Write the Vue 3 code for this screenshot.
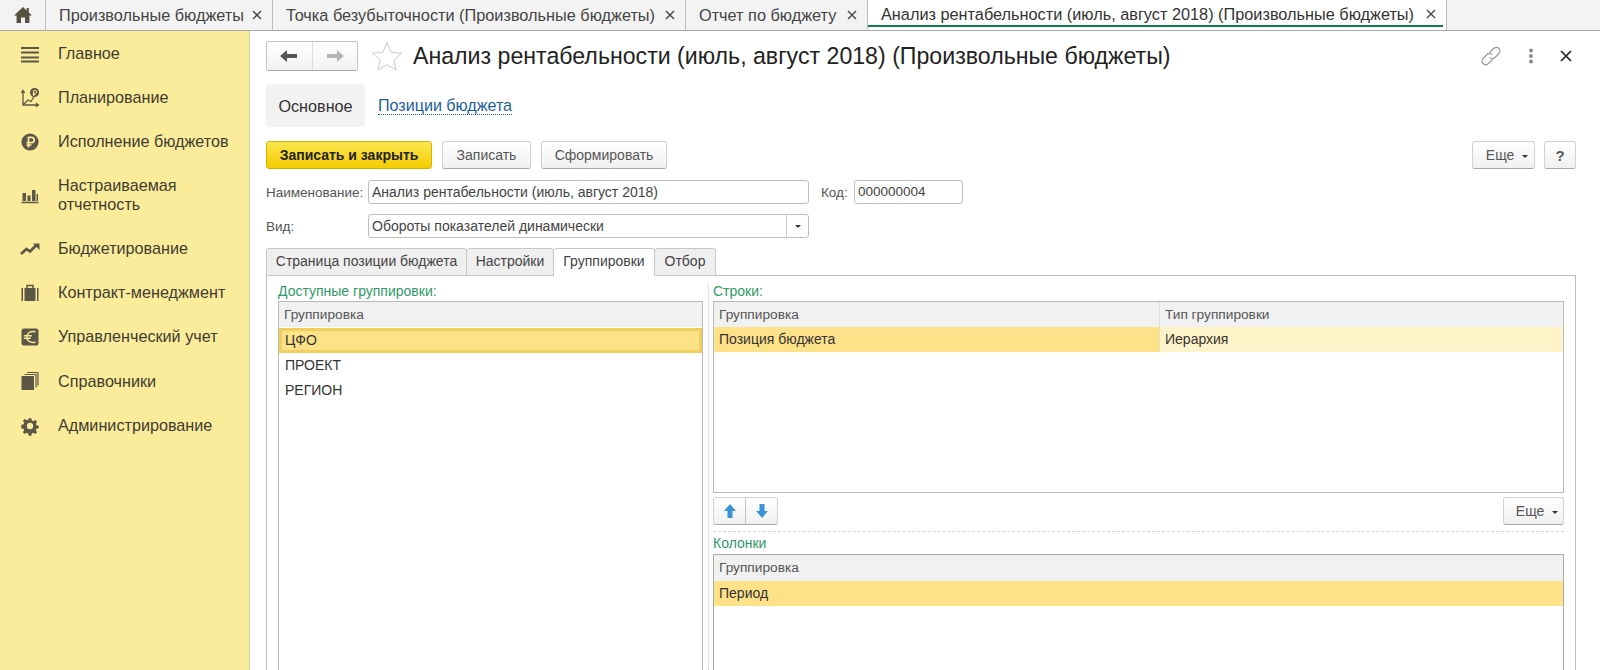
<template>
  <div class="page">
    <header class="topbar">
      <div class="home">
        <svg width="20" height="18" viewBox="0 0 20 18"><path d="M10 1 L1 9.5 H3.6 V17 H8 V11.5 H12 V17 H16.4 V9.5 H19 L15.8 6.4 V2 H13.6 V4.4 Z" fill="#55503f" /></svg>
      </div>
      <div v-for="tab in tabs" :key="tab.title" class="tab" :class="{ active: tab.active }" :style="{ width: tab.width + 'px' }">
        <span>{{ tab.title }}</span>
        <svg class="tab-close" width="10" height="10" viewBox="0 0 10 10"><path d="M1 1 L9 9 M9 1 L1 9" stroke="#444" stroke-width="1.4" /></svg>
      </div>
    </header>

    <div class="main">
      <aside class="sidebar">
        <div v-for="item in menu" :key="item.title" class="menu-item" :class="{ tall: item.tall }">
          <svg class="menu-icon" width="20" height="20" viewBox="0 0 20 20" v-html="item.icon"></svg>
          <span>{{ item.title }}</span>
        </div>
      </aside>

      <main class="content">
        <div class="title-row">
          <div class="nav-btns">
            <button class="nav-btn">
              <svg width="20" height="14" viewBox="0 0 20 14"><path d="M1 7 L8 1 V5 H18 V9 H8 V13 Z" fill="#555" /></svg>
            </button>
            <button class="nav-btn">
              <svg width="20" height="14" viewBox="0 0 20 14"><path d="M19 7 L12 1 V5 H2 V9 H12 V13 Z" fill="#b4b4b4" /></svg>
            </button>
          </div>
          <svg class="star" width="32" height="30" viewBox="0 0 32 30"><path d="M16 1.5 L20.2 11.4 L30.6 12.2 L22.7 19.2 L25.1 29 L16 23.7 L6.9 29 L9.3 19.2 L1.4 12.2 L11.8 11.4 Z" fill="#fff" stroke="#c9c9c9" /></svg>
          <h1 class="title">Анализ рентабельности (июль, август 2018) (Произвольные бюджеты)</h1>
          <div class="title-icons">
            <svg width="22" height="22" viewBox="0 0 22 22" fill="none" stroke="#9a9a9a" stroke-width="1.3"><path d="M9.5 7.5 L13 4 C15 2 17.5 2 19 3.5 C20.5 5 20 7.5 18.5 9 L15 12.5 C13.5 14 11 14 9.8 12.4" /><path d="M12.5 14.5 L9 18 C7 20 4.5 20 3 18.5 C1.5 17 2 14.5 3.5 13 L7 9.5 C8.5 8 11 8 12.2 9.6" /></svg>
            <svg width="6" height="16" viewBox="0 0 6 16"><circle cx="3" cy="2.5" r="1.9" fill="#888" /><circle cx="3" cy="8" r="1.9" fill="#888" /><circle cx="3" cy="13.5" r="1.9" fill="#888" /></svg>
            <svg width="12" height="12" viewBox="0 0 12 12"><path d="M1 1 L11 11 M11 1 L1 11" stroke="#222" stroke-width="1.7" /></svg>
          </div>
        </div>

        <div class="sections">
          <div class="section-current">Основное</div>
          <a class="section-link">Позиции бюджета</a>
        </div>

        <div class="command-bar">
          <button class="btn btn-primary">Записать и закрыть</button>
          <button class="btn btn-save">Записать</button>
          <button class="btn btn-form">Сформировать</button>
          <button class="btn btn-more top-more">Еще <i class="caret"></i></button>
          <button class="btn btn-help">?</button>
        </div>

        <div class="form-row name-row">
          <label class="field-label">Наименование:</label>
          <div class="input name-input">Анализ рентабельности (июль, август 2018)</div>
          <label class="code-label">Код:</label>
          <div class="input code-input">000000004</div>
        </div>
        <div class="form-row kind-row">
          <label class="field-label">Вид:</label>
          <div class="input kind-input">
            <span>Обороты показателей динамически</span>
            <span class="drop"><i class="caret"></i></span>
          </div>
        </div>

        <div class="page-tabs">
          <div class="page-tab tab-a">Страница позиции бюджета</div>
          <div class="page-tab tab-b">Настройки</div>
          <div class="page-tab tab-c current">Группировки</div>
          <div class="page-tab tab-d">Отбор</div>
        </div>

        <section class="panel">
          <div class="col-left">
            <div class="group-title">Доступные группировки:</div>
            <div class="grid left-grid">
              <div class="grid-head">Группировка</div>
              <div class="left-row selected-cell">ЦФО</div>
              <div class="left-row">ПРОЕКТ</div>
              <div class="left-row">РЕГИОН</div>
            </div>
          </div>

          <div class="col-right">
            <div class="group-title">Строки:</div>
            <div class="grid rows-grid">
              <div class="grid-head two-col">
                <span class="cell-a">Группировка</span>
                <span class="cell-b">Тип группировки</span>
              </div>
              <div class="grid-row two-col">
                <span class="cell-a picked">Позиция бюджета</span>
                <span class="cell-b picked-light">Иерархия</span>
              </div>
            </div>
            <div class="grid-tools">
              <div class="move-btns">
                <button class="move-btn">
                  <svg width="14" height="16" viewBox="0 0 14 16"><path d="M7 1 L13 8 H9.5 V15 H4.5 V8 H1 Z" fill="#3a93d2" /></svg>
                </button>
                <button class="move-btn">
                  <svg width="14" height="16" viewBox="0 0 14 16"><path d="M7 15 L13 8 H9.5 V1 H4.5 V8 H1 Z" fill="#3a93d2" /></svg>
                </button>
              </div>
              <button class="btn btn-more tools-more">Еще <i class="caret"></i></button>
            </div>
            <div class="group-title columns-title">Колонки</div>
            <div class="grid columns-grid">
              <div class="grid-head">Группировка</div>
              <div class="grid-row picked">Период</div>
            </div>
          </div>
        </section>
      </main>
    </div>
  </div>
</template>

<script setup>
const tabs = [
  { title: 'Произвольные бюджеты', width: 227 },
  { title: 'Точка безубыточности (Произвольные бюджеты)', width: 413 },
  { title: 'Отчет по бюджету', width: 182 },
  { title: 'Анализ рентабельности (июль, август 2018) (Произвольные бюджеты)', width: 579, active: true },
]

const ink = '#5b5645'

const menu = [
  {
    title: 'Главное',
    icon: `<path d="M1 3h18v2H1zM1 7.5h18v2H1zM1 12.5h18v2H1zM1 16.500h18v2H1z" fill="${ink}"/>`,
  },
  {
    title: 'Планирование',
    icon: `<path d="M3 3v14h15M1.3 5L3 2.5 4.7 5M16 15.3l2.4 1.7-2.4 1.7M3 17l5-5 3 1.5 3-5" fill="none" stroke="${ink}" stroke-width="1.3"/><circle cx="14.5" cy="4.5" r="4.5" fill="${ink}"/><path d="M13.6 8V2.5h1.6a1.4 1.4 0 010 2.8h-2.4M12.8 6.6h2.6" fill="none" stroke="#fbec9c" stroke-width="1"/>`,
  },
  {
    title: 'Исполнение бюджетов',
    icon: `<circle cx="10" cy="10" r="8.6" fill="${ink}"/><path d="M8.5 15.5V5.3h3a2.7 2.7 0 010 5.4H6.5M6.5 13h5" fill="none" stroke="#fbec9c" stroke-width="1.7"/>`,
  },
  {
    title: 'Настраиваемая отчетность',
    tall: true,
    icon: `<path d="M2.500 8h3.500v8H2.500zM7.500 10.500h3V16h-3zM12 5h3.500v11H12zM16.500 9H18v7h-1.500zM1.500 16.800h17v1.400h-17z" fill="${ink}"/>`,
  },
  {
    title: 'Бюджетирование',
    icon: `<path d="M1 15l5.5-5 3.500 2.500 6-6" fill="none" stroke="${ink}" stroke-width="2.600"/><path d="M13 4.500h6.500V11z" fill="${ink}"/>`,
  },
  {
    title: 'Контракт-менеджмент',
    icon: `<path d="M7 5V2.500h6V5" fill="none" stroke="${ink}" stroke-width="1.500"/><path d="M1.500 5H3v13H1.500zM4.500 5h11v13h-11zM17 5h1.500v13H17z" fill="${ink}"/>`,
  },
  {
    title: 'Управленческий учет',
    icon: `<rect x="1.500" y="1.500" width="17" height="17" rx="2.500" fill="${ink}"/><path d="M15.500 4.800C9.500 3.400 6.800 7 6.800 10c0 3 2.700 6.600 8.700 5.200M3.800 8.800h8M3.800 11.200h7" fill="none" stroke="#fbec9c" stroke-width="1.400"/>`,
  },
  {
    title: 'Справочники',
    icon: `<path d="M1.500 5h12.500v14H1.500z" fill="${ink}"/><path d="M4.500 3.500h11.500v13M7 1.500h11v13" fill="none" stroke="${ink}" stroke-width="1.200"/>`,
  },
  {
    title: 'Администрирование',
    icon: `<path d="M8.500 1.500h3l.5 2.500 1.700.7 2.200-1.400 2 2-1.400 2.200.7 1.700 2.500.5v2.800l-2.500.5-.7 1.700 1.400 2.200-2 2-2.200-1.400-1.700.7-.5 2.500h-3l-.5-2.500-1.700-.7-2.200 1.400-2-2 1.400-2.200-.7-1.700-2.500-.5V8.700l2.500-.5.7-1.700-1.400-2.200 2-2 2.200 1.400 1.700-.7z" fill="${ink}" transform="translate(1 1) scale(.9)"/><circle cx="10" cy="10" r="3.200" fill="#fbec9c"/>`,
  },
]
</script>

<style scoped>
.page {
  height: 670px;
  display: flex;
  flex-direction: column;
  overflow: hidden;
  background: #fff;
  font-family: "Liberation Sans", Arial, sans-serif;
  color: #333;
}

.topbar {
  height: 30px;
  display: flex;
  flex-shrink: 0;
  background: #f3f3f3;
  border-bottom: 1px solid #a8a8a8;
}

.home {
  width: 45px;
  display: flex;
  align-items: center;
  justify-content: center;
  border-right: 1px solid #bdbdbd;
}

.tab {
  position: relative;
  display: flex;
  align-items: center;
  justify-content: space-between;
  padding: 0 10px 0 13px;
  border-right: 1px solid #bdbdbd;
  box-sizing: border-box;
  font-size: 16.3px;
  color: #444;
  white-space: nowrap;
  background: #f3f3f3;
}

.tab.active {
  background: #fff;
  color: #333;
  padding-bottom: 2px;
}

.tab.active::after {
  content: "";
  position: absolute;
  left: 0;
  right: 3px;
  bottom: 3px;
  height: 2px;
  background: #0f7b4f;
}

.main {
  flex: 1;
  display: flex;
  min-height: 0;
}

.sidebar {
  width: 250px;
  flex-shrink: 0;
  padding-top: 0.5px;
  background: #fbec9c;
  border-right: 1px solid #d6cf9d;
  box-sizing: border-box;
}

.menu-item {
  height: 44.3px;
  display: flex;
  align-items: center;
  padding-left: 20px;
  font-size: 16.2px;
  line-height: 19.5px;
  color: #3f3c30;
}

.menu-item.tall {
  height: 62px;
}

.menu-item span {
  max-width: 180px;
  white-space: normal;
}

.menu-icon {
  flex-shrink: 0;
  margin-right: 18px;
}

.content {
  flex: 1;
  min-width: 0;
  padding: 10px 24px 0 16px;
}

.title-row {
  height: 30px;
  display: flex;
  align-items: center;
}

.nav-btns {
  width: 92px;
  height: 30px;
  display: flex;
  box-sizing: border-box;
  border: 1px solid #c4c4c4;
  border-bottom-color: #a8a8a8;
  border-radius: 3px;
  overflow: hidden;
}

.nav-btn {
  flex: 1;
  display: flex;
  align-items: center;
  justify-content: center;
  padding: 0;
  border: none;
  background: linear-gradient(#fff, #f2f2f2);
}

.nav-btn + .nav-btn {
  border-left: 1px solid #dedede;
}

.star {
  margin-left: 13px;
}

.title {
  margin: 0 0 0 10px;
  font-size: 23.15px;
  font-weight: 400;
  color: #222;
  white-space: nowrap;
}

.title-icons {
  margin-left: auto;
  width: 96px;
  display: flex;
  align-items: center;
  justify-content: space-between;
  padding-right: 4px;
  box-sizing: border-box;
}

.sections {
  margin-top: 13px;
  height: 43px;
  display: flex;
  align-items: center;
}

.section-current {
  width: 99px;
  height: 43px;
  line-height: 44px;
  text-align: center;
  background: #f2f2f2;
  border-radius: 4px;
  font-size: 16.2px;
  color: #333;
}

.section-link {
  margin: 1px 0 0 13px;
  font-size: 16.1px;
  color: #1b5e9b;
  border-bottom: 1px dotted #1b5e9b;
  line-height: 17px;
}

.command-bar {
  margin-top: 14px;
  height: 28px;
  display: flex;
}

.btn {
  height: 28px;
  padding: 0;
  box-sizing: border-box;
  border: 1px solid #d2d2d2;
  border-bottom-color: #aaa;
  border-radius: 3px;
  background: linear-gradient(#fff, #f0f0f0);
  font-family: inherit;
  font-size: 14px;
  color: #555;
}

.btn-primary {
  width: 166px;
  border-color: #d5b400;
  background: linear-gradient(#fbe64f, #f3cc00);
  color: #222;
  font-weight: 700;
}

.btn-save {
  width: 89px;
  margin-left: 10px;
}

.btn-form {
  width: 126px;
  margin-left: 10px;
}

.btn-more {
  padding-left: 7px;
}

.top-more {
  width: 63px;
  margin-left: auto;
}

.btn-help {
  width: 32px;
  margin-left: 9px;
  font-weight: 700;
  font-size: 15px;
}

.caret {
  display: inline-block;
  margin-left: 4px;
  vertical-align: middle;
  border-left: 3px solid transparent;
  border-right: 3px solid transparent;
  border-top: 3px solid #333;
}

.form-row {
  display: flex;
  align-items: center;
  height: 24px;
  font-size: 14px;
}

.name-row {
  margin-top: 11px;
}

.kind-row {
  margin-top: 10px;
}

.field-label {
  width: 102px;
  font-size: 13.5px;
  color: #555;
  white-space: nowrap;
}

.input {
  height: 24px;
  box-sizing: border-box;
  border: 1px solid #bfbfbf;
  border-radius: 3px;
  padding-left: 3px;
  line-height: 22px;
  color: #444;
}

.name-input {
  width: 441px;
}

.code-label {
  margin-left: 12px;
  width: 33px;
  font-size: 13.5px;
  color: #555;
}

.code-input {
  width: 109px;
  font-size: 13.5px;
}

.kind-input {
  width: 441px;
  display: flex;
  justify-content: space-between;
}

.drop {
  width: 21px;
  display: flex;
  align-items: center;
  justify-content: center;
  border-left: 1px solid #ccc;
}

.drop .caret {
  margin-left: 0;
}

.page-tabs {
  margin-top: 10px;
  height: 27px;
  display: flex;
  font-size: 14px;
}

.page-tab {
  box-sizing: border-box;
  height: 28px;
  line-height: 25px;
  text-align: center;
  background: #efefef;
  border: 1px solid #c6c6c6;
  border-left: none;
  border-radius: 3px 3px 0 0;
  color: #444;
}

.tab-a {
  width: 201px;
  border-left: 1px solid #c6c6c6;
}

.tab-b {
  width: 87px;
}

.tab-c {
  width: 101px;
}

.tab-d {
  width: 61px;
}

.page-tab.current {
  background: #fff;
  border-bottom-color: #fff;
  position: relative;
  z-index: 1;
}

.panel {
  height: 500px;
  box-sizing: border-box;
  display: flex;
  padding: 8px 11px 0 11px;
  border: 1px solid #bcbcbc;
  font-size: 14px;
}

.col-left {
  width: 425px;
  flex-shrink: 0;
  padding-right: 5px;
  border-right: 1px dotted #cfcfcf;
}

.col-right {
  flex: 1;
  min-width: 0;
  margin-left: 4px;
}

.group-title {
  height: 17px;
  line-height: 15px;
  color: #2f9a68;
}

.grid {
  box-sizing: border-box;
  border: 1px solid #b9b9b9;
  color: #333;
}

.left-grid {
  height: 480px;
  border-bottom: none;
}

.grid-head {
  height: 25px;
  line-height: 25px;
  padding-left: 5px;
  background: #f1f1f1;
  color: #555;
  font-size: 13.7px;
}

.left-row {
  height: 25px;
  line-height: 25px;
  padding-left: 6px;
  color: #333;
}

.selected-cell {
  margin-top: 1px;
  box-sizing: border-box;
  line-height: 19px;
  padding-left: 3px;
  border: 3px solid #f0cf5c;
  background: #fee28a;
}

.rows-grid {
  height: 192px;
}

.two-col {
  display: flex;
  padding-left: 0;
}

.cell-a {
  width: 445px;
  padding-left: 5px;
  box-sizing: border-box;
}

.cell-b {
  flex: 1;
  padding-left: 5px;
  border-left: 1px solid #dcdcdc;
}

.grid-row {
  height: 25px;
  line-height: 25px;
  color: #333;
}

.picked {
  background: #fee28a;
}

.picked-light {
  background: #fff3c9;
  border-left-color: #f3e3b0;
}

.columns-grid {
  height: 130px;
  margin-top: 1px;
  border-color: #a8a8a8;
}

.columns-grid .grid-head {
  height: 26px;
}

.columns-grid .grid-row {
  padding-left: 5px;
}

.grid-tools {
  margin-top: 4px;
  padding-bottom: 6px;
  display: flex;
  justify-content: space-between;
  border-bottom: 1px dashed #d4d4d4;
}

.move-btns {
  width: 65px;
  height: 28px;
  display: flex;
  box-sizing: border-box;
  border: 1px solid #d2d2d2;
  border-bottom-color: #aaa;
  border-radius: 3px;
  overflow: hidden;
}

.move-btn {
  flex: 1;
  padding: 0;
  border: none;
  display: flex;
  align-items: center;
  justify-content: center;
  background: linear-gradient(#fff, #f0f0f0);
}

.move-btn + .move-btn {
  border-left: 1px solid #c4c4c4;
}

.tools-more {
  width: 61px;
}

.columns-title {
  margin-top: 4px;
}
</style>
